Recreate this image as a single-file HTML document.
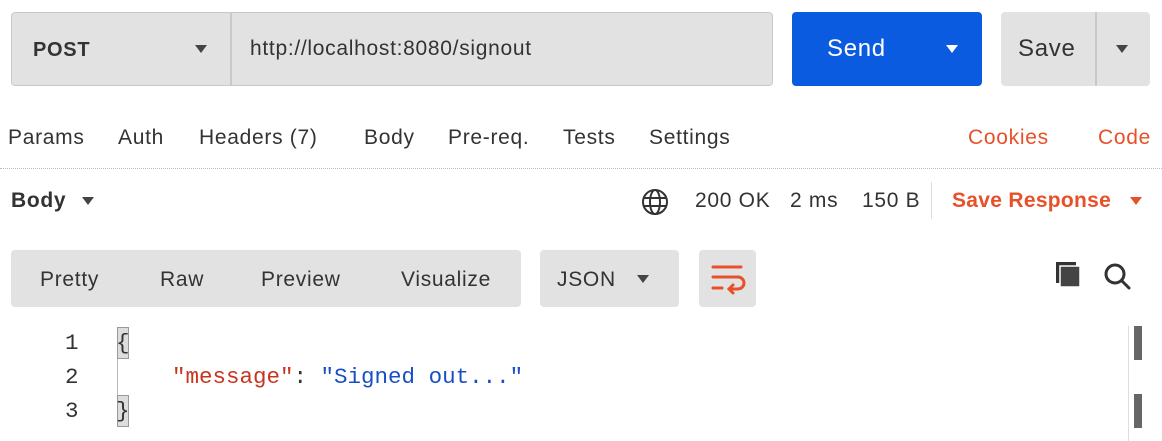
<!DOCTYPE html><html><head><style>
body{margin:0;width:1162px;height:441px;background:#fff;position:relative;overflow:hidden;font-family:"Liberation Sans",sans-serif;color:#333}
.a{position:absolute}
.t{position:absolute;font-size:21px;line-height:24px;white-space:nowrap;letter-spacing:0.7px}
.tri{position:absolute;width:0;height:0;border-left:6px solid transparent;border-right:6px solid transparent;border-top:8px solid #444}
.m{font-family:"Liberation Mono","DejaVu Sans Mono",monospace;font-size:22.5px;letter-spacing:0}
</style></head><body>
<div class="a" style="left:11px;top:12px;width:760px;height:72px;background:#e2e2e2;border:1px solid #c9c9c9;border-radius:4px"></div>
<div class="a" style="left:230px;top:12px;width:2px;height:74px;background:#c9c9c9"></div>
<div class="t" style="left:33px;top:38px;font-weight:bold;font-size:20px">POST</div>
<div class="tri" style="left:195px;top:45px"></div>
<div class="t" style="left:250px;top:37px">http://localhost:8080/signout</div>
<div class="a" style="left:792px;top:12px;width:190px;height:74px;background:#0b5be0;border-radius:4px"></div>
<div class="t" style="left:827px;top:37px;color:#fff;font-size:24px">Send</div>
<div class="tri" style="left:946px;top:45px;border-top-color:#fff"></div>
<div class="a" style="left:1001px;top:12px;width:149px;height:74px;background:#e2e2e2;border-radius:4px"></div>
<div class="a" style="left:1095px;top:12px;width:2px;height:74px;background:#c9c9c9"></div>
<div class="t" style="left:1018px;top:37px;font-size:24px">Save</div>
<div class="tri" style="left:1116px;top:45px"></div>
<div class="t" style="left:8px;top:126px">Params</div>
<div class="t" style="left:118px;top:126px">Auth</div>
<div class="t" style="left:199px;top:126px">Headers (7)</div>
<div class="t" style="left:364px;top:126px">Body</div>
<div class="t" style="left:448px;top:126px">Pre-req.</div>
<div class="t" style="left:563px;top:126px">Tests</div>
<div class="t" style="left:649px;top:126px">Settings</div>
<div class="t" style="left:968px;top:126px;color:#e8502a">Cookies</div>
<div class="t" style="left:1098px;top:126px;color:#e8502a">Code</div>
<div class="a" style="left:0;top:168px;width:1162px;border-top:1px dotted #bbb"></div>
<div class="t" style="left:11px;top:189px;font-weight:bold">Body</div>
<div class="tri" style="left:82px;top:197px"></div>
<svg class="a" style="left:641px;top:188px" width="28" height="28" viewBox="0 0 28 28" fill="none" stroke="#333" stroke-width="2"><circle cx="14" cy="14" r="12"/><ellipse cx="14" cy="14" rx="5" ry="12"/><line x1="2" y1="10" x2="26" y2="10"/><line x1="2" y1="18" x2="26" y2="18"/></svg>
<div class="t" style="left:695px;top:189px">200 OK</div>
<div class="t" style="left:790px;top:189px">2 ms</div>
<div class="t" style="left:862px;top:189px">150 B</div>
<div class="a" style="left:931px;top:182px;width:1px;height:37px;background:#ddd"></div>
<div class="t" style="left:952px;top:189px;color:#e8502a;font-weight:bold;letter-spacing:0.3px">Save Response</div>
<div class="tri" style="left:1130px;top:197px;border-top-color:#e8502a"></div>
<div class="a" style="left:11px;top:250px;width:510px;height:57px;background:#e2e2e2;border-radius:4px"></div>
<div class="t" style="left:40px;top:268px">Pretty</div>
<div class="t" style="left:160px;top:268px">Raw</div>
<div class="t" style="left:261px;top:268px">Preview</div>
<div class="t" style="left:401px;top:268px">Visualize</div>
<div class="a" style="left:540px;top:250px;width:139px;height:57px;background:#e2e2e2;border-radius:4px"></div>
<div class="t" style="left:557px;top:268px">JSON</div>
<div class="tri" style="left:637px;top:275px"></div>
<div class="a" style="left:699px;top:250px;width:57px;height:57px;background:#e2e2e2;border-radius:4px"></div>
<svg class="a" style="left:710px;top:262px" width="36" height="36" viewBox="0 0 36 36" fill="none" stroke="#e8502a" stroke-width="3" stroke-linecap="round"><line x1="3" y1="5" x2="31" y2="5"/><line x1="3" y1="15" x2="28" y2="15"/><path d="M28 15a6 6 0 0 1 0 12h-8"/><path d="M23 23l-4 4 4 4"/><line x1="3" y1="26" x2="12" y2="26"/></svg>
<svg class="a" style="left:1055px;top:261px" width="30" height="30" viewBox="0 0 30 30"><rect x="1" y="1" width="20" height="21" fill="#333"/><rect x="5" y="5" width="20" height="21" fill="#444" stroke="#fff" stroke-width="1.5"/></svg>
<svg class="a" style="left:1103px;top:262px" width="30" height="30" viewBox="0 0 30 30" fill="none" stroke="#333" stroke-width="3"><circle cx="12" cy="12" r="9"/><line x1="19" y1="19" x2="26" y2="26" stroke-linecap="round"/></svg>
<div class="a" style="left:1128px;top:326px;width:1px;height:115px;background:#ddd"></div>
<div class="a" style="left:1134px;top:326px;width:8px;height:34px;background:#666"></div>
<div class="a" style="left:1134px;top:394px;width:8px;height:34px;background:#666"></div>
<div class="a" style="left:117px;top:358px;width:1px;height:40px;background:#bbb"></div>
<div class="t m" style="left:65px;top:331px">1</div>
<div class="t m" style="left:65px;top:365px">2</div>
<div class="t m" style="left:65px;top:399px">3</div>
<div class="a" style="left:117px;top:327px;width:10px;height:30px;background:#ddd;border:1px solid #999"></div>
<div class="a" style="left:117px;top:395px;width:10px;height:30px;background:#ddd;border:1px solid #999"></div>
<div class="t m" style="left:116px;top:331px">{</div>
<div class="t m" style="left:116px;top:399px">}</div>
<div class="t m" style="left:172px;top:365px"><span style="color:#c8341e">"message"</span>: <span style="color:#1a4fc4">"Signed out..."</span></div>
</body></html>
